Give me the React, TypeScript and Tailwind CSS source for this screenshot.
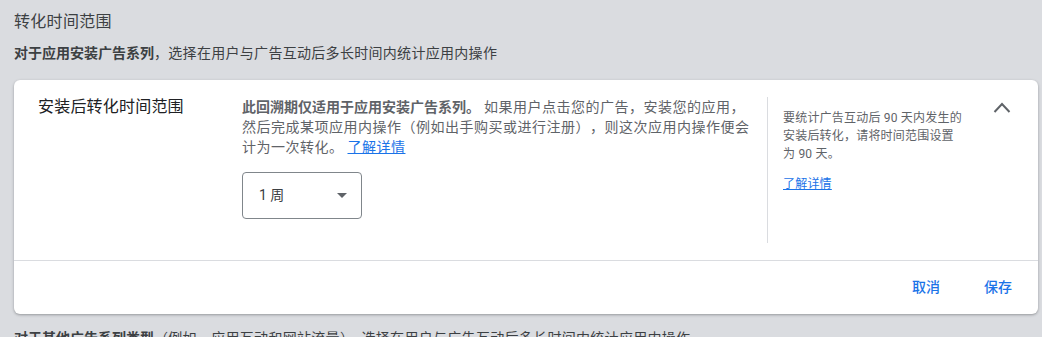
const font = { fontFamily: 'Roboto, "Noto Sans CJK SC", sans-serif' };

function ChevronUp() {
  return (
    <svg width="24" height="24" viewBox="0 0 24 24" className="shrink-0">
      <polyline points="4.5,16 12,8 19.5,16" fill="none" stroke="#5f6368" strokeWidth="2" />
    </svg>
  );
}

export default function App() {
  return (
    <div className="min-h-[337px] bg-[#dadce0] pl-[14px] pr-[4px] pt-[10px] text-[#3c4043]" style={font}>
      <h2 className="text-[16px] leading-[24px] tracking-[0.3px]">转化时间范围</h2>
      <p className="mt-[9px] text-[14px] leading-[20px] tracking-[0.3px]">
        <span className="font-bold tracking-normal">对于应用安装广告系列</span>，选择在用户与广告互动后多长时间内统计应用内操作
      </p>

      {/* Expanded card */}
      <div className="mt-[17px] rounded-[6px] bg-white shadow-[0_1px_3px_rgba(60,64,67,0.3),0_1px_2px_rgba(60,64,67,0.15)]">
        <div className="flex pl-[24px] py-[17px] border-b border-[#dadce0]">
          <div className="w-[204px] shrink-0 text-[16px] leading-[20px] tracking-[0.2px] text-[#202124]">安装后转化时间范围</div>

          <div className="flex-1 pb-[24px]">
            <p className="w-[510px] text-[14px] leading-[20px] tracking-[0.5px] text-[#5f6368] [text-spacing-trim:space-all]">
              <span className="font-bold tracking-normal">此回溯期仅适用于应用安装广告系列。</span> 如果用户点击您的广告，安装您的应用，然后完成某项应用内操作（例如出手购买或进行注册），则这次应用内操作便会计为一次转化。{" "}
              <a className="text-[#1a73e8] underline">了解详情</a>
            </p>
            <div className="mt-[15px] flex h-[47px] w-[120px] items-center justify-between rounded-[4px] border border-[#80868b] pl-[16px] pr-[14px]">
              <span className="text-[14px] text-[#3c4043]">1 周</span>
              <svg width="10" height="5" viewBox="0 0 10 5">
                <path d="M0 0l5 5 5-5z" fill="#5f6368" />
              </svg>
            </div>
          </div>

          <div className="flex w-[271px] shrink-0 border-l border-[#dadce0] pl-[15px] pr-[24px]">
            <div className="w-[181px] pt-[12px] text-[12px] leading-[18px] tracking-[0.2px] text-[#5f6368]">
              <p>要统计广告互动后 90 天内发生的安装后转化，请将时间范围设置为 90 天。</p>
              <a className="mt-[12px] block text-[#1a73e8] underline">了解详情</a>
            </div>
            <div className="ml-auto -mt-[1px]">
              <ChevronUp />
            </div>
          </div>
        </div>

        <div className="flex h-[53px] items-center justify-end gap-[12px] pr-[10px]">
          <button className="px-[16px] text-[14px] font-medium text-[#1a73e8]">取消</button>
          <button className="px-[16px] text-[14px] font-medium text-[#1a73e8]">保存</button>
        </div>
      </div>

      <p className="mt-[14px] text-[14px] leading-[20px] tracking-[0.3px]">
        <span className="font-bold tracking-normal">对于其他广告系列类型</span>（例如，应用互动和网站流量），选择在用户与广告互动后多长时间内统计应用内操作
      </p>
    </div>
  );
}
